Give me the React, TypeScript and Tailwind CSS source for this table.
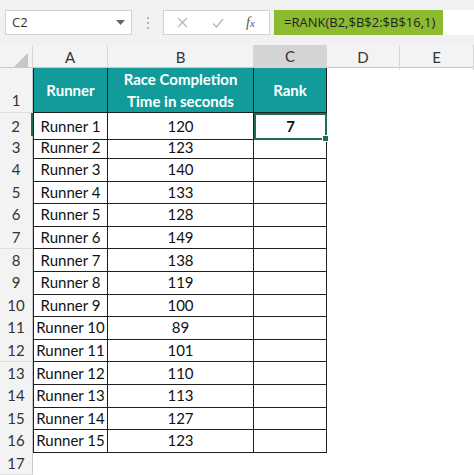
import React from "react";

const runners: [string, number][] = [
  ["Runner 1", 120],
  ["Runner 2", 123],
  ["Runner 3", 140],
  ["Runner 4", 133],
  ["Runner 5", 128],
  ["Runner 6", 149],
  ["Runner 7", 138],
  ["Runner 8", 119],
  ["Runner 9", 100],
  ["Runner 10", 89],
  ["Runner 11", 101],
  ["Runner 12", 110],
  ["Runner 13", 113],
  ["Runner 14", 127],
  ["Runner 15", 123],
];

const cols = "grid grid-cols-[33px_75px_146px_73px_73px_1fr]";

function Toolbar() {
  return (
    <div className="flex h-[45px] items-center bg-[#f1f1f1] pl-[5px] font-['Open_Sans',sans-serif] text-[#333]">
      <div className="flex h-[25px] w-[127px] items-center justify-between border border-[#d2d2d2] bg-white pl-[6px] pr-[6px] text-[13px]">
        <span>C2</span>
        <svg width="9" height="5" viewBox="0 0 9 5"><path d="M0 0h9L4.5 5z" fill="#666" /></svg>
      </div>
      <div className="flex w-[31px] flex-col items-center gap-[3px]">
        <span className="h-[2px] w-[2px] bg-[#b5b5b5]" />
        <span className="h-[2px] w-[2px] bg-[#b5b5b5]" />
        <span className="h-[2px] w-[2px] bg-[#b5b5b5]" />
      </div>
      <div className="flex h-[25px] w-[107px] items-center border border-[#d2d2d2] bg-white">
        <svg className="ml-[13px]" width="11" height="11" viewBox="0 0 11 11">
          <path d="M1 1l9 9M10 1l-9 9" stroke="#b8b8b8" strokeWidth="1.3" />
        </svg>
        <svg className="ml-[24px]" width="12" height="10" viewBox="0 0 12 10">
          <path d="M1 5.5l3.5 3.5L11 1" stroke="#b8b8b8" strokeWidth="1.3" fill="none" />
        </svg>
        <span className="ml-[22px] font-['Liberation_Serif',serif] text-[14px] italic text-[#555]">
          f<span className="text-[11px]">x</span>
        </span>
      </div>
      <div className="ml-[4px] flex h-[25px] flex-1 items-center bg-white">
        <div className="flex h-full w-[169px] items-center bg-[#8dbb2f] pl-[10px] text-[13px] text-[#222]">
          =RANK(B2,$B$2:$B$16,1)
        </div>
      </div>
    </div>
  );
}

function ColumnHeaders() {
  const head = "flex items-center justify-center border-r border-[#d6d6d6] text-[15px] text-[#333]";
  return (
    <div className={`${cols} h-[23px] bg-[#f3f3f3] border-b border-[#c8c8c8]`}>
      <div className="relative border-r border-[#d6d6d6]">
        <svg className="absolute bottom-[3px] right-[4px]" width="14" height="14" viewBox="0 0 14 14">
          <path d="M14 0V14H0z" fill="#c6c6c6" />
        </svg>
      </div>
      <div className={head}>A</div>
      <div className={head}>B</div>
      <div className={`${head} bg-[#d4d4d4] border-b-2 border-b-[#1e6e4f] text-[#1e5a44]`}>C</div>
      <div className={head}>D</div>
      <div className={head}>E</div>
    </div>
  );
}

export default function App() {
  const rowHead = "flex items-center justify-center bg-[#f3f3f3] border-r border-[#c8c8c8] border-b border-b-[#dedede] text-[15px] text-[#333]";
  const cell = "flex items-center justify-center border-r border-b border-[#1f1f1f] text-[15px] text-[#111]";
  return (
    <div className="h-[475px] w-[474px] overflow-hidden bg-white font-['Lato',sans-serif]">
      <Toolbar />
      <ColumnHeaders />
      {/* header row */}
      <div className={`${cols} h-[45px]`}>
        <div className={`${rowHead} items-end pb-[1px]`}>1</div>
        <div className={`${cell} border-l bg-[#119c9b] font-bold text-white`}>Runner</div>
        <div className={`${cell} flex-col bg-[#119c9b] font-bold leading-[22px] text-white`}>
          <span>Race Completion</span>
          <span>Time in seconds</span>
        </div>
        <div className={`${cell} bg-[#119c9b] font-bold text-white`}>Rank</div>
        <div />
        <div />
      </div>
      {runners.map(([name, time], i) => (
        <div key={name} className={`${cols} h-[22.6px]`}>
          <div className={`${rowHead} ${i === 0 ? "bg-[#d4d4d4] border-r-2 border-r-[#1e6e4f] text-[#1e5a44]" : ""}`}>
            {i + 2}
          </div>
          <div className={`${cell} border-l`}>{name}</div>
          <div className={cell}>{time}</div>
          {i === 0 ? (
            <div className="relative flex items-center justify-center border-2 border-[#1e6e4f] text-[15px] font-bold text-[#111]">
              7
              <span className="absolute -bottom-[3px] -right-[3px] h-[5px] w-[5px] bg-[#1e6e4f] outline outline-1 outline-white" />
            </div>
          ) : (
            <div className={cell} />
          )}
          <div />
          <div />
        </div>
      ))}
      <div className={`${cols} h-[23px]`}>
        <div className={rowHead}>17</div>
      </div>
    </div>
  );
}
